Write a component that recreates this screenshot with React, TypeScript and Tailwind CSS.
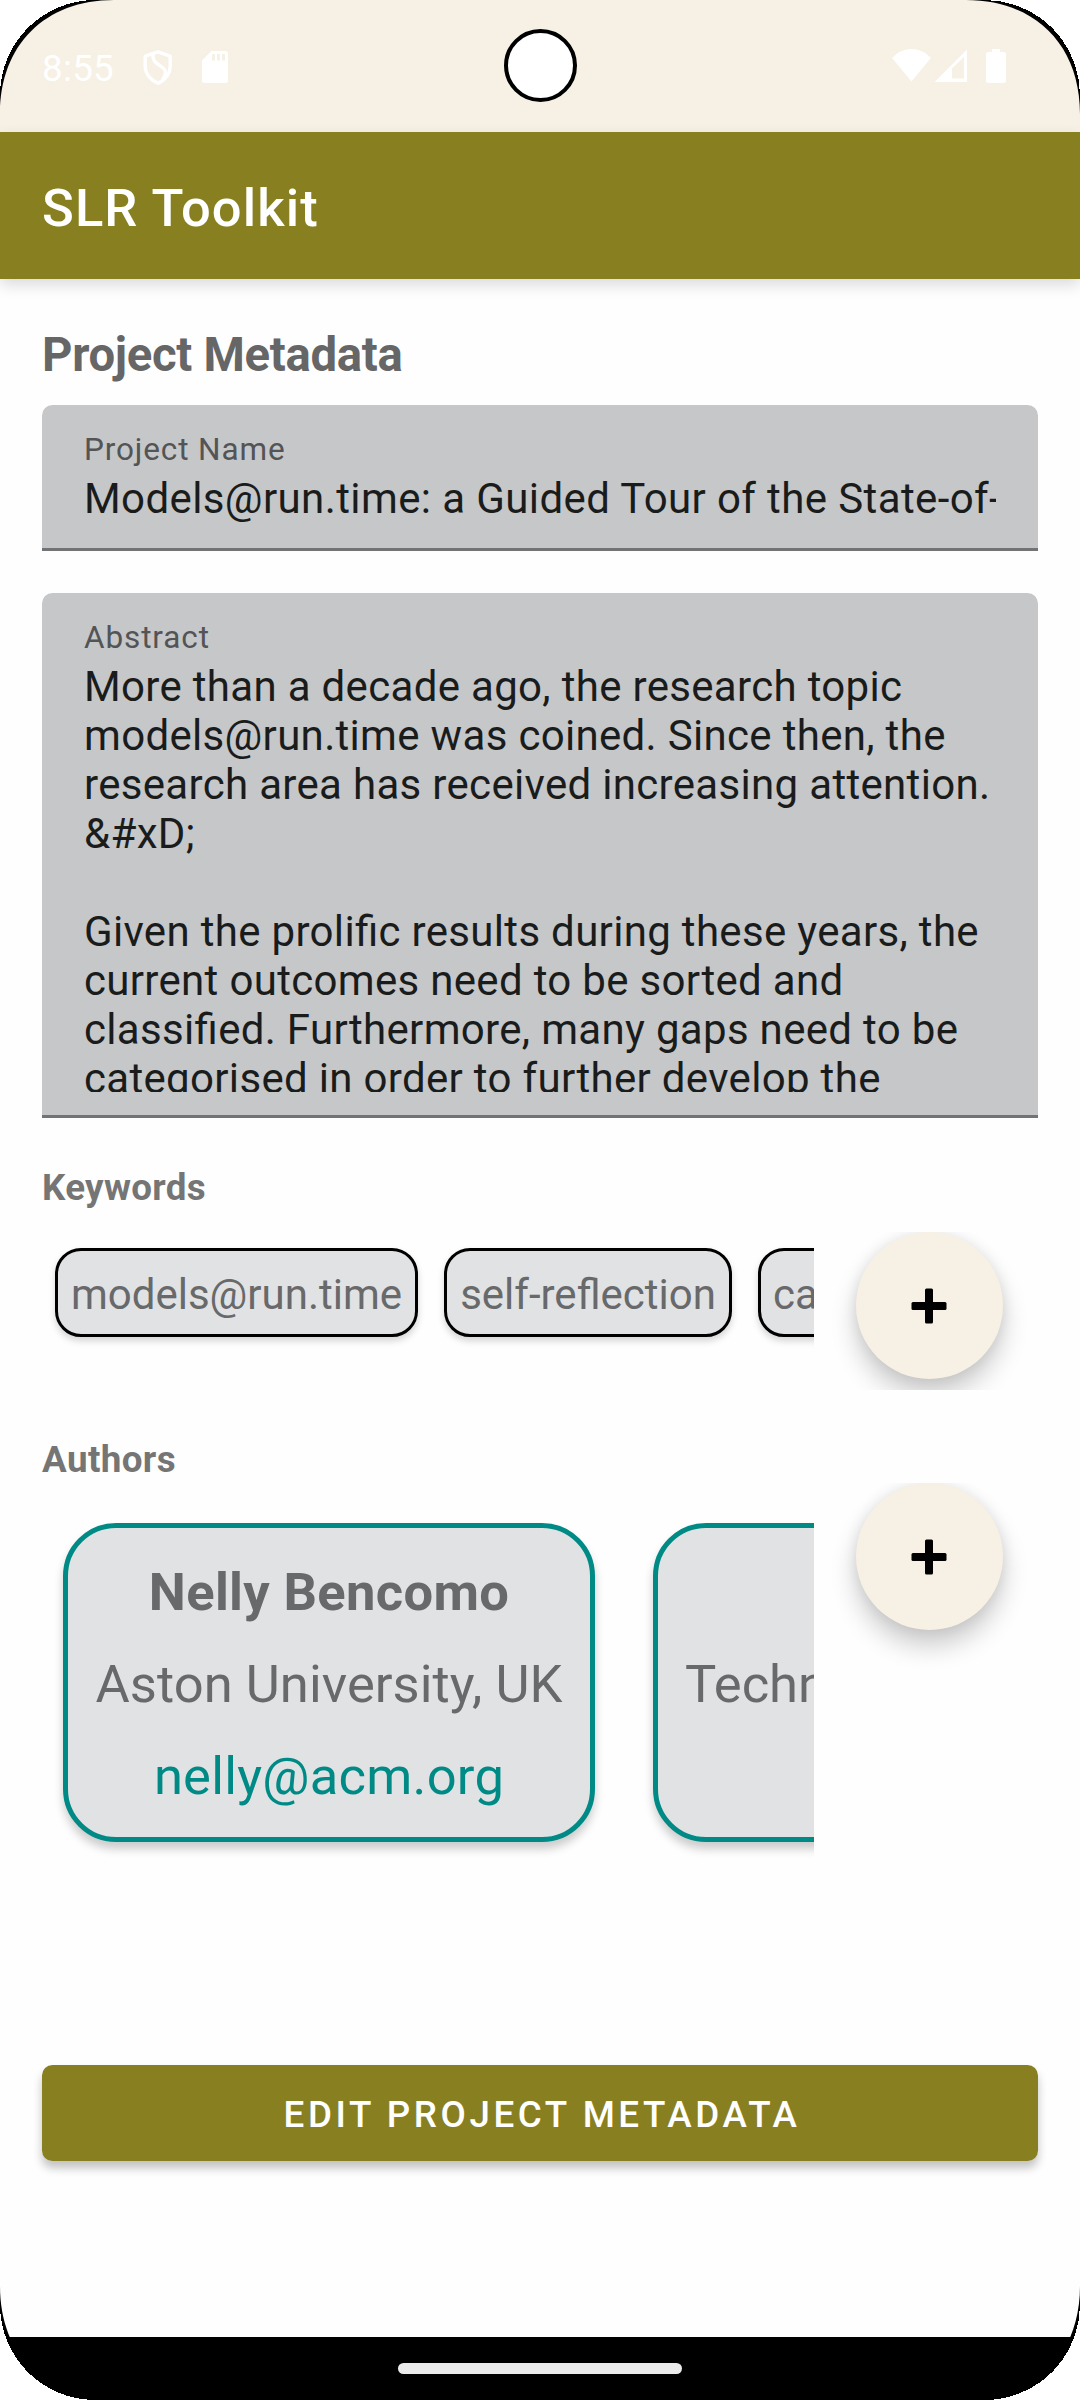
import React from "react";

function ShieldIcon() {
  return (
    <svg width="30" height="36" viewBox="0 0 30 36" fill="none" stroke="white" strokeWidth="3.4">
      <path d="M15 1.8 L27.2 6.2 V16 C27.2 24 22 30.5 15 33.2 C8 30.5 2.2 24 2.2 16 V6.2 Z" strokeLinejoin="round" />
      <path d="M10 4 C9 16 22 15 22.5 22 C22.6 25 21.5 27 19.5 30" />
    </svg>
  );
}

function SdIcon() {
  return (
    <svg width="26" height="32" viewBox="0 0 26 32">
      <path
        fill="white"
        fillRule="evenodd"
        d="M9.5 0 H23.5 A2.5 2.5 0 0 1 26 2.5 V29.5 A2.5 2.5 0 0 1 23.5 32 H2.5 A2.5 2.5 0 0 1 0 29.5 V9.5 Z M10 3 V9.5 H13 V3 Z M15 3 V9.5 H18 V3 Z M20 3 V9.5 H23 V3 Z"
      />
    </svg>
  );
}

function FrameCorner({ className }: { className: string }) {
  return (
    <svg className={className} width="116" height="116" viewBox="0 0 116 116">
      <path d="M0 0 H114 C45 0 0 45 0 114 Z" fill="black" />
      <path d="M0 0 H94 C42 1 1 42 0 94 Z" fill="white" shapeRendering="crispEdges" />
    </svg>
  );
}

function AddButton() {
  return (
    <button
      aria-label="Add"
      className="ml-[41.5px] flex size-[147px] shrink-0 items-center justify-center rounded-full bg-[#f7f0e4] shadow-[0_16px_26px_rgba(0,0,0,0.2),0_0_14px_rgba(0,0,0,0.08)]"
    >
      <svg width="36" height="36" viewBox="0 0 36 36">
        <rect x="0.5" y="14" width="35" height="8" rx="1.5" />
        <rect x="14" y="0.5" width="8" height="35" rx="1.5" />
      </svg>
    </button>
  );
}

function Chip({ children, className }: { children: React.ReactNode; className: string }) {
  return (
    <div
      className={`h-[89px] shrink-0 whitespace-nowrap rounded-[26px] border-[3px] border-black bg-[#e1e2e4] pt-[19px] text-[42px] leading-[49px] text-[#68696b] shadow-[0_4px_7px_rgba(0,0,0,0.17)] ${className}`}
    >
      {children}
    </div>
  );
}

function Field({ label, children, className }: { label: string; children: React.ReactNode; className: string }) {
  return (
    <div className={`rounded-t-[10.5px] border-b-[3px] border-[#727375] bg-[#c6c7c9] px-[42px] pt-[26px] ${className}`}>
      <div className="mb-[6px] text-[31.5px] leading-[37px] tracking-[0.028em] text-[#535455]">{label}</div>
      {children}
    </div>
  );
}

const abstractLines = [
  "More than a decade ago, the research topic",
  "models@run.time was coined. Since then, the",
  "research area has received increasing attention.",
  "&#xD;",
  "",
  "Given the prolific results during these years, the",
  "current outcomes need to be sorted and",
  "classified. Furthermore, many gaps need to be",
  "categorised in order to further develop the",
];

export default function App() {
  return (
    <div className="relative flex h-[2400px] w-[1080px] flex-col overflow-hidden bg-[#fefefe] font-['Roboto',sans-serif]">
      <header className="flex h-[132px] shrink-0 items-start bg-[#f7f0e4] text-white">
        <div className="mt-[47px] ml-[42px] w-[101px] text-[36.75px] leading-[43px] tracking-[0.3px]">8:55</div>
        <div className="mt-[50px]">
          <ShieldIcon />
        </div>
        <div className="mt-[51px] ml-[29px]">
          <SdIcon />
        </div>
        <div className="mt-[29px] ml-[276px] size-[73px] rounded-full border-[4.5px] border-black bg-white" />
        <svg className="mt-[48px] ml-[315px]" width="116" height="36" viewBox="0 0 116 36" fill="white">
          <path d="M0 10 C11 -2 28 -2 39 10 L19.5 33.5 Z" />
          <path fillRule="evenodd" d="M42.5 34 L75 1.5 V34 Z M60 20.5 V30.5 H72 V9 Z" />
          <path d="M100 1 H108 V4 H111.5 A2.5 2.5 0 0 1 114 6.5 V32.5 A2.5 2.5 0 0 1 111.5 35 H96.5 A2.5 2.5 0 0 1 94 32.5 V6.5 A2.5 2.5 0 0 1 96.5 4 H100 Z" />
        </svg>
      </header>

      <div className="flex h-[147px] shrink-0 items-center bg-[#888020] pt-[5px] pl-[42px] text-[52.5px] leading-[62px] font-medium tracking-[1.1px] text-white shadow-[0_6px_14px_rgba(0,0,0,0.14)]">
        SLR Toolkit
      </div>

      <main className="flex grow flex-col px-[42px] pt-[49px]">
        <h1 className="text-[47.25px] leading-[55px] font-bold tracking-[-0.3px] text-[#666667]">Project Metadata</h1>

        <Field label="Project Name" className="mt-[22px] h-[146px]">
          <div className="overflow-hidden text-[42px] leading-[49px] tracking-[0.009375em] whitespace-nowrap text-[#1a1c1c] [font-feature-settings:'liga'_1]">
            Models@run.time: a Guided Tour of the State-of-
          </div>
        </Field>

        <Field label="Abstract" className="mt-[42px] h-[525px]">
          <div className="h-[430px] overflow-hidden text-[42px] leading-[49px] tracking-[0.32px] whitespace-nowrap text-[#1a1c1c] [font-feature-settings:'liga'_1]">
            {abstractLines.map((line, i) => (
              <div key={i} className="h-[49px]">
                {line}
              </div>
            ))}
          </div>
        </Field>

        <h2 className="mt-[48px] text-[36.75px] leading-[43px] font-bold tracking-[0.3px] text-[#757575]">Keywords</h2>
        <section className="-mr-[42px] mt-[23px] flex h-[158px] shrink-0 overflow-hidden">
          <div className="flex w-[772px] shrink-0 gap-[26px] overflow-hidden pt-[16px] pl-[13px]">
            <Chip className="w-[363px] text-center">models@run.time</Chip>
            <Chip className="w-[288px] text-center">self-reflection</Chip>
            <Chip className="w-[288px] pl-[12px] text-left">causality</Chip>
          </div>
          <AddButton />
        </section>

        <h2 className="mt-[48px] text-[36.75px] leading-[43px] font-bold tracking-[0.4px] text-[#757575]">Authors</h2>
        <section className="-mr-[42px] mt-[2px] flex h-[400px] shrink-0 overflow-hidden">
          <div className="flex w-[772px] shrink-0 gap-[58px] overflow-hidden pt-[40px] pl-[21px]">
            <article className="flex h-[319px] w-[532px] shrink-0 flex-col gap-[30px] rounded-[53px] border-[5px] border-[#008a86] bg-[#e1e2e4] pt-[33px] text-center text-[52.5px] leading-[62px] text-[#68696b] shadow-[0_7px_10px_rgba(0,0,0,0.2)]">
              <div className="font-bold tracking-[0.33px]">Nelly Bencomo</div>
              <div className="tracking-[0.05px]">Aston University, UK</div>
              <div className="tracking-[0.25px] text-[#008a86]">nelly@acm.org</div>
            </article>
            <article className="h-[319px] w-[900px] shrink-0 rounded-[53px] border-[5px] border-[#008a86] bg-[#e1e2e4] pt-[125px] pl-[27px] text-[52.5px] leading-[62px] whitespace-nowrap text-[#68696b] shadow-[0_7px_10px_rgba(0,0,0,0.2)]">
              Technische Universität
            </article>
          </div>
          <AddButton />
        </section>

        <button className="mt-[182px] h-[96px] shrink-0 rounded-[10.5px] bg-[#888020] pt-[2px] pl-[4px] text-[36.75px] leading-[43px] font-medium tracking-[3.58px] text-white shadow-[0_7px_10px_rgba(0,0,0,0.24)]">
          EDIT PROJECT METADATA
        </button>
      </main>

      <nav className="flex h-[63px] shrink-0 justify-center bg-black pt-[26px]">
        <div className="h-[11px] w-[284px] rounded-full bg-[#ebebeb]" />
      </nav>

      <FrameCorner className="absolute top-0 left-0" />
      <FrameCorner className="absolute top-0 right-0 -scale-x-100" />
      <FrameCorner className="absolute bottom-0 left-0 -scale-y-100" />
      <FrameCorner className="absolute right-0 bottom-0 rotate-180" />
    </div>
  );
}
